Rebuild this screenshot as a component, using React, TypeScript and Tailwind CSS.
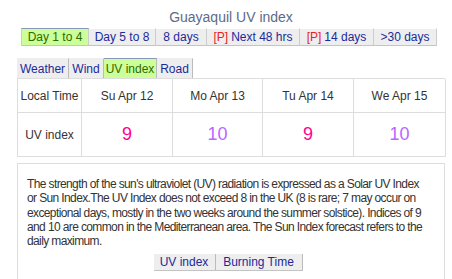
export default function App() {
  const topTabs = [
    { label: "Day 1 to 4", w: "w-[68px]", active: true },
    { label: "Day 5 to 8", w: "w-[67px]" },
    { label: "8 days", w: "w-[51px]" },
    { label: "Next 48 hrs", w: "w-[93px]", premium: true },
    { label: "14 days", w: "w-[74px]", premium: true },
    { label: ">30 days", w: "w-[63px]" },
  ];
  const subTabs = [
    { label: "Weather", w: "w-[52px]" },
    { label: "Wind", w: "w-[35px]" },
    { label: "UV index", w: "w-[53px]", active: true },
    { label: "Road", w: "w-[36px]" },
  ];
  const days = [
    { day: "Su Apr 12", uv: 9 },
    { day: "Mo Apr 13", uv: 10 },
    { day: "Tu Apr 14", uv: 9 },
    { day: "We Apr 15", uv: 10 },
  ];

  return (
    <div className="w-[452px] h-[279px] overflow-hidden bg-white font-['Liberation_Sans',Arial,sans-serif] text-[#333333]">
      <div className="w-[428px] ml-[17px] flex flex-col">
        {/* Title */}
        <h1 className="mt-[9px] text-center text-[14px] leading-[17px] text-[#5d6b88]">
          Guayaquil UV index
        </h1>

        {/* Period tabs */}
        <div className="mt-[2px] ml-[4px] flex">
          {topTabs.map((t) => (
            <div
              key={t.label}
              className={`${t.w} h-[18px] flex items-center justify-center text-[12px] border-r border-b border-r-[#cccccc] border-b-[#c4c4c4] border-t ${
                t.active
                  ? "bg-[#ccff99] text-[#2d6a00] border-t-[#8a97b8] border-l border-l-[#cccccc]"
                  : "bg-[#eeeeee] text-[#1a2a9c] border-t-white"
              }`}
            >
              {t.premium && <span className="text-[#e8231f] mr-[3px]">[P]</span>}
              {t.label}
            </div>
          ))}
        </div>

        {/* Forecast type tabs */}
        <div className="mt-[12px] flex">
          {subTabs.map((t) => (
            <div
              key={t.label}
              className={`${t.w} h-[20px] flex items-center justify-center text-[12px] border-r border-r-[#bbbbbb] border-t ${
                t.active
                  ? "bg-[#ccff99] text-[#2d6a00] border-t-[#8a97b8]"
                  : "bg-[#eeeeee] text-[#1a2a9c] border-t-[#eeeeee]"
              }`}
            >
              {t.label}
            </div>
          ))}
        </div>

        {/* Table */}
        <div className="w-[428px] grid grid-cols-[64px_91px_90px_91px_92px] border-t border-l border-[#dddddd] text-[12px]">
          <div className="h-[34px] flex items-center justify-center border-r border-b border-[#dddddd]">
            Local Time
          </div>
          {days.map((d) => (
            <div
              key={d.day}
              className="h-[34px] flex items-center justify-center border-r border-b border-[#dddddd]"
            >
              {d.day}
            </div>
          ))}
          <div className="h-[44px] flex items-center justify-center border-r border-b border-[#dddddd]">
            UV index
          </div>
          {days.map((d) => (
            <div
              key={d.day + "uv"}
              className={`h-[44px] flex items-center justify-center border-r border-b border-[#dddddd] text-[18px] ${
                d.uv >= 10 ? "text-[#bb66ff]" : "text-[#ff0090]"
              }`}
            >
              {d.uv}
            </div>
          ))}
        </div>

        {/* Description */}
        <div className="mt-[6px] h-[140px] border border-[#dddddd] px-[9px] pt-[13px]">
          <p className="text-[12px] leading-[14.3px] tracking-[-0.62px] whitespace-nowrap text-[#333333]">
            The strength of the sun's ultraviolet (UV) radiation is expressed as a Solar UV Index
            <br />
            or Sun Index.The UV Index does not exceed 8 in the UK (8 is rare; 7 may occur on
            <br />
            exceptional days, mostly in the two weeks around the summer solstice). Indices of 9
            <br />
            and 10 are common in the Mediterranean area. The Sun Index forecast refers to the
            <br />
            daily maximum.
          </p>
          <div className="mt-[6px] flex justify-center pr-[6px]">
            <div className="w-[62px] h-[17px] flex items-center justify-center bg-[#eeeeee] text-[12px] text-[#1a2a9c] border-r border-b border-r-[#bbbbbb] border-b-[#c4c4c4]">
              UV index
            </div>
            <div className="w-[87px] h-[17px] flex items-center justify-center bg-[#eeeeee] text-[12px] text-[#1a2a9c] border-r border-b border-r-[#bbbbbb] border-b-[#c4c4c4]">
              Burning Time
            </div>
          </div>
        </div>
      </div>
    </div>
  );
}
